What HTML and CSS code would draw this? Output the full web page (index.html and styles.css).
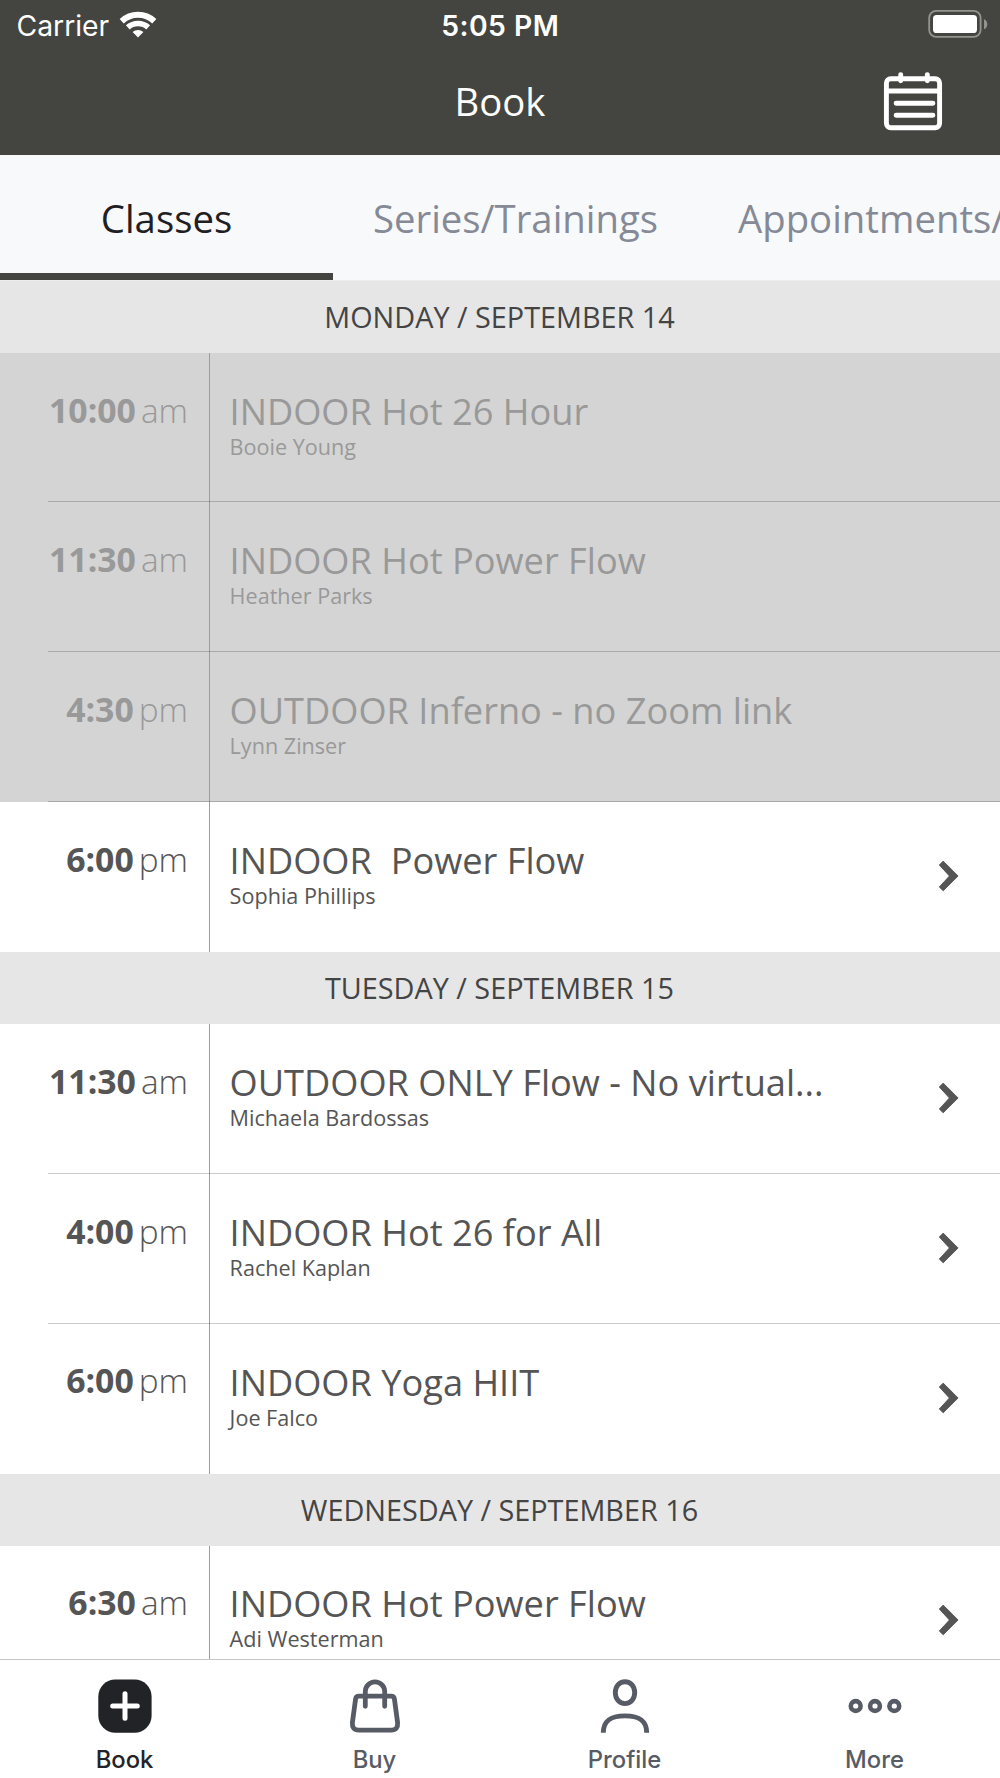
FILE: index.html
```html
<!DOCTYPE html>
<html lang="en">
<head>
<meta charset="utf-8">
<title>Book</title>
<link rel="stylesheet" href="styles.css">
</head>
<body>
<div class="app">
  <header class="top">
    <div class="status">
      <div class="carrier">Carrier
        <svg class="wifi" width="38" height="28" viewBox="0 0 38 28" fill="none" stroke="#fff">
          <path d="M2.7 11.2A24 24 0 0 1 35.3 11.2" stroke-width="6"/>
          <path d="M8.8 17.4A15.2 15.2 0 0 1 29.2 17.4" stroke-width="5.6"/>
          <path d="M19 27.4L13.6 21.9A8.6 8.6 0 0 1 24.4 21.9Z" fill="#fff" stroke="none"/>
        </svg>
      </div>
      <div class="clock">5:05 PM</div>
      <svg class="battery" width="60" height="28" viewBox="0 0 60 28">
        <rect x="1.2" y="0.9" width="51.4" height="26" rx="7" fill="none" stroke="#94948f" stroke-width="1.8"/>
        <rect x="5" y="5" width="44" height="18" rx="3.6" fill="#fff"/>
        <path d="M56 9.2C60.4 10.6 60.4 17.8 56 19.2Z" fill="#94948f"/>
      </svg>
    </div>
    <div class="nav">
      <h1 class="title">Book</h1>
      <svg class="calendar" width="60" height="60" viewBox="0 0 60 60" fill="none" stroke="#fff" stroke-width="4.9" stroke-linecap="round">
        <rect x="3.4" y="7.7" width="53.2" height="49" rx="4.4"/>
        <path d="M3.4 20H56.6M17.7 3.6V9.8M44.3 3.6V9.8M13.1 32.3H49.9M13.1 44.3H49.9"/>
      </svg>
    </div>
  </header>

  <nav class="tabs">
    <div class="tab tab-active">Classes</div>
    <div class="tab">Series/Trainings</div>
    <div class="tab">Appointments/</div>
  </nav>

  <main class="schedule">
    <h2 class="day">MONDAY / SEPTEMBER 14</h2>
    <div class="row past">
      <div class="time"><b>10:00</b><span>am</span></div>
      <div class="info"><div class="name">INDOOR Hot 26 Hour</div><div class="teacher">Booie Young</div></div>
    </div>
    <div class="row past">
      <div class="time"><b>11:30</b><span>am</span></div>
      <div class="info"><div class="name">INDOOR Hot Power Flow</div><div class="teacher">Heather Parks</div></div>
    </div>
    <div class="row past">
      <div class="time"><b>4:30</b><span>pm</span></div>
      <div class="info"><div class="name">OUTDOOR Inferno - no Zoom link</div><div class="teacher">Lynn Zinser</div></div>
    </div>
    <div class="row">
      <div class="time"><b>6:00</b><span>pm</span></div>
      <div class="info"><div class="name">INDOOR  Power Flow</div><div class="teacher">Sophia Phillips</div></div>
      <svg class="chevron" width="22" height="32" viewBox="0 0 22 32"><path d="M1.3 5L5.2 1.1 20.1 16 5.2 30.8 1.3 27 11.4 16Z"/></svg>
    </div>

    <h2 class="day">TUESDAY / SEPTEMBER 15</h2>
    <div class="row">
      <div class="time"><b>11:30</b><span>am</span></div>
      <div class="info"><div class="name">OUTDOOR ONLY Flow - No virtual...</div><div class="teacher">Michaela Bardossas</div></div>
      <svg class="chevron" width="22" height="32" viewBox="0 0 22 32"><path d="M1.3 5L5.2 1.1 20.1 16 5.2 30.8 1.3 27 11.4 16Z"/></svg>
    </div>
    <div class="row">
      <div class="time"><b>4:00</b><span>pm</span></div>
      <div class="info"><div class="name">INDOOR Hot 26 for All</div><div class="teacher">Rachel Kaplan</div></div>
      <svg class="chevron" width="22" height="32" viewBox="0 0 22 32"><path d="M1.3 5L5.2 1.1 20.1 16 5.2 30.8 1.3 27 11.4 16Z"/></svg>
    </div>
    <div class="row">
      <div class="time"><b>6:00</b><span>pm</span></div>
      <div class="info"><div class="name">INDOOR Yoga HIIT</div><div class="teacher">Joe Falco</div></div>
      <svg class="chevron" width="22" height="32" viewBox="0 0 22 32"><path d="M1.3 5L5.2 1.1 20.1 16 5.2 30.8 1.3 27 11.4 16Z"/></svg>
    </div>

    <h2 class="day">WEDNESDAY / SEPTEMBER 16</h2>
    <div class="row">
      <div class="time"><b>6:30</b><span>am</span></div>
      <div class="info"><div class="name">INDOOR Hot Power Flow</div><div class="teacher">Adi Westerman</div></div>
      <svg class="chevron" width="22" height="32" viewBox="0 0 22 32"><path d="M1.3 5L5.2 1.1 20.1 16 5.2 30.8 1.3 27 11.4 16Z"/></svg>
    </div>
  </main>

  <footer class="tabbar">
    <div class="item item-active">
      <svg width="54" height="54" viewBox="0 0 54 54">
        <rect x=".3" y=".4" width="53.3" height="53.3" rx="17" fill="#222327"/>
        <path d="M27 14.7V39.3M14.7 27H39.3" stroke="#fff" stroke-width="5" stroke-linecap="round"/>
      </svg>
      <span>Book</span>
    </div>
    <div class="item">
      <svg width="54" height="54" viewBox="0 0 54 54" fill="none" stroke="#575b65" stroke-width="4.8" stroke-linecap="round" stroke-linejoin="round">
        <path d="M10.8 17.1H43.2Q46 17.1 46.4 19.8L49.6 43.6Q50.2 51.2 43.2 51.2H10.8Q3.8 51.2 4.4 43.6L7.6 19.8Q8 17.1 10.8 17.1Z"/>
        <path d="M17.3 27.3V12.6A9.7 9.7 0 0 1 36.7 12.6V27.3"/>
      </svg>
      <span>Buy</span>
    </div>
    <div class="item">
      <svg width="54" height="54" viewBox="0 0 54 54" fill="none" stroke="#575b65" stroke-width="4.9">
        <path d="M27 2.8C32.8 2.8 36.7 7.4 36.7 13.6S32.8 24.6 27 24.6 17.3 19.8 17.3 13.6 21.2 2.8 27 2.8Z"/>
        <path d="M5.3 53.7C5.3 40.8 13.6 36.9 27 36.9S48.7 40.8 48.7 53.7"/>
      </svg>
      <span>Profile</span>
    </div>
    <div class="item">
      <svg width="54" height="54" viewBox="0 0 54 54" fill="none" stroke="#575b65" stroke-width="4.6">
        <circle cx="7.7" cy="27" r="4.9"/><circle cx="27" cy="27" r="4.9"/><circle cx="46.3" cy="27" r="4.9"/>
      </svg>
      <span>More</span>
    </div>
  </footer>
</div>
</body>
</html>
```
FILE: styles.css
```css
* { box-sizing: border-box; }

body {
  margin: 0;
  background: #fff;
  font-family: "Open Sans", "Noto Sans", sans-serif;
  color: #555;
}

svg { display: block; flex: none; }

.app {
  display: flex;
  flex-direction: column;
  width: 1000px;
  height: 1778px;
  overflow: hidden;
}

/* Status bar and title */
.top {
  flex: none;
  height: 155px;
  background: #444540;
  color: #fff;
}

.status {
  display: grid;
  grid-template-columns: 1fr auto 1fr;
  height: 51px;
  padding: 0 12px 0 16.5px;
  font: 400 28.3px/53px Inter, sans-serif;
}

.carrier { display: flex; gap: 10px; }
.wifi { margin-top: 10px; }
.clock { font-weight: 600; letter-spacing: 0.45px; margin-left: -4px; }
.battery { margin-top: 10px; justify-self: end; }

.nav {
  display: grid;
  grid-template-columns: 1fr auto 1fr;
  padding: 0 57px;
}

.title {
  grid-column: 2;
  margin: 0;
  font-size: 38.3px;
  font-weight: 400;
  line-height: 100px;
}

.calendar { justify-self: end; margin-top: 20px; }

/* Category tabs */
.tabs {
  display: flex;
  flex: none;
  height: 126px;
  overflow: hidden;
  background: #f8f9fb;
  border-bottom: 1px solid #ededed;
}

.tab {
  flex: none;
  padding: 0 40px;
  font-size: 38.3px;
  line-height: 127px;
  text-align: center;
  color: #858a96;
}

.tab-active {
  width: 333px;
  color: #1f2024;
  border-bottom: 7px solid #444540;
}

/* Schedule */
.schedule {
  flex: 1;
  min-height: 0;
  overflow: hidden;
}

.day {
  height: 72px;
  margin: 0;
  padding-right: 1px;
  background: #e6e6e6;
  color: #444;
  font-size: 28.8px;
  font-weight: 400;
  line-height: 71px;
  text-align: center;
}

.row {
  position: relative;
  display: flex;
  height: 149.83px;
}

.row:has(+ .row)::after {
  content: "";
  position: absolute;
  left: 48px;
  right: 0;
  bottom: 0.4px;
  height: 1px;
  background: rgba(0, 0, 0, 0.2);
}

.past { background: #d4d4d4; color: #999; }

.time {
  display: flex;
  justify-content: flex-end;
  gap: 5px;
  width: 210px;
  padding: 34.5px 21px 0 0;
  border-right: 1px solid rgba(0, 0, 0, 0.38);
  font-size: 33.8px;
  line-height: 44px;
}

.time span { font-size: 33.3px; font-weight: 300; }
.past .time { border-right-color: rgba(0, 0, 0, 0.26); }

.info { flex: 1; padding: 35.6px 0 0 19.6px; }
.name { font-size: 36.2px; line-height: 44px; white-space: pre; }
.teacher { font-size: 21.6px; line-height: 28px; }

.chevron {
  margin: 58px 40px 0 0;
  fill: #555;
  stroke: #555;
  stroke-width: 0.9px;
  stroke-linejoin: round;
}

/* Bottom bar */
.tabbar {
  display: grid;
  grid-template-columns: repeat(4, 1fr);
  flex: none;
  height: 119px;
  border-top: 1px solid #c6c6c6;
  background: #fff;
}

.item {
  display: flex;
  flex-direction: column;
  align-items: center;
  gap: 13.7px;
  padding: 18.6px 1px 0 0;
  font: 500 23.8px/28px Inter, sans-serif;
  color: #575b65;
}

.item-active { color: #222327; }
```
